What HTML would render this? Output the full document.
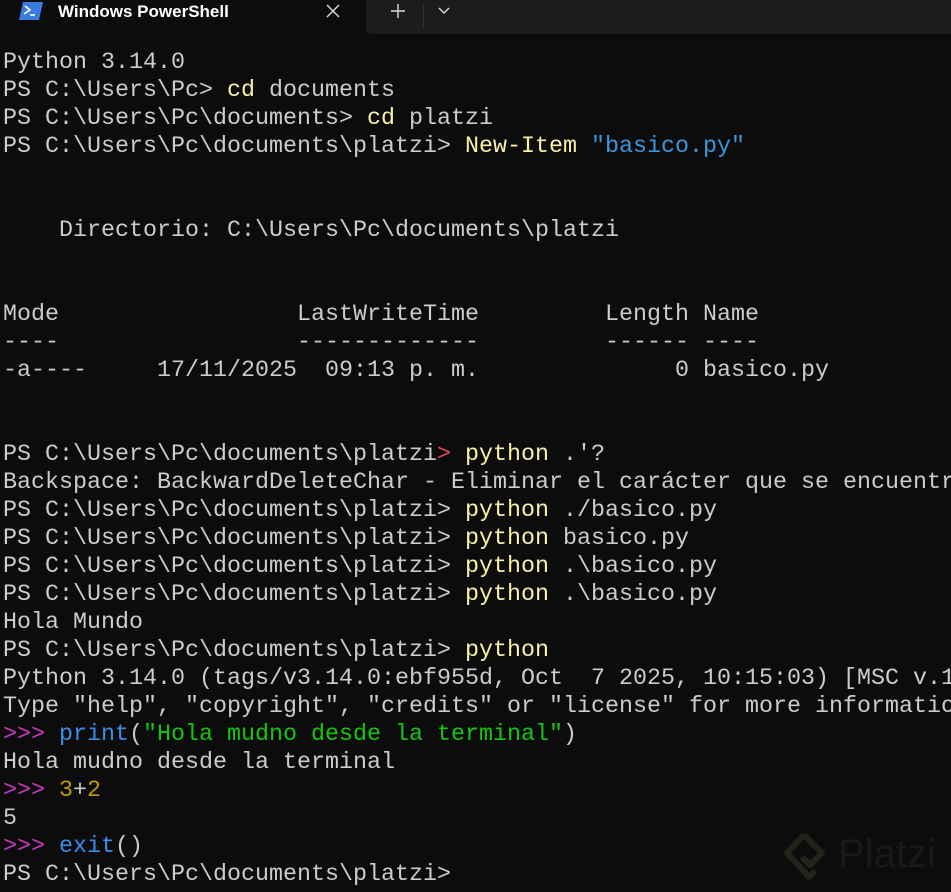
<!DOCTYPE html>
<html><head><meta charset="utf-8"><style>
html,body{margin:0;padding:0;background:#0c0c0c;width:951px;height:892px;overflow:hidden}
.bar{position:absolute;left:0;top:0;width:951px;height:34px;background:#0c0c0c}
.right{position:absolute;left:366px;top:0;width:600px;height:34px;background:#1c1c1c;border-bottom-left-radius:6px}
.sep{position:absolute;left:423px;top:5px;width:1px;height:24px;background:#333}
.title{position:absolute;left:58px;top:1px;font:600 17px "Liberation Sans",sans-serif;color:#fff;line-height:22px}
.term{position:absolute;left:3px;top:49px;font-family:"Liberation Mono",monospace;font-size:23.33px;line-height:28px;color:#cccccc;white-space:pre}
.y{color:#f9f1a5}.b{color:#3b8eea}.r{color:#e74856}.m{color:#c839c5}.g{color:#16c60c}.o{color:#c19c00}.s{color:#3a96dd}
.wm{position:absolute;left:838px;top:830px;font:40px "Liberation Sans",sans-serif;color:#191919;line-height:48px}
</style></head><body>
<div class="bar"></div>
<div class="right"></div><div class="sep"></div>
<svg style="position:absolute;left:19px;top:2px" width="24" height="18" viewBox="0 0 24 18"><path d="M4 0H24L20 18H0Z" fill="#3a7be0"/><path d="M6 4L11 8L5 12" stroke="#fff" stroke-width="1.6" fill="none"/><path d="M11 13H16" stroke="#fff" stroke-width="1.6"/></svg>
<div class="title">Windows PowerShell</div>
<svg style="position:absolute;left:326px;top:4px" width="14" height="14"><path d="M1 1L13 13M13 1L1 13" stroke="#ddd" stroke-width="1.4"/></svg>
<svg style="position:absolute;left:390px;top:3px" width="16" height="16"><path d="M8 1V15M1 8H15" stroke="#ddd" stroke-width="1.4"/></svg>
<svg style="position:absolute;left:438px;top:7px" width="12" height="8"><path d="M1 1L6 6L11 1" stroke="#ddd" stroke-width="1.4" fill="none"/></svg>
<svg style="position:absolute;left:782px;top:830px" width="48" height="56" viewBox="0 0 48 56"><path d="M22 5L40 23L28 35L20 27" stroke="#22241a" stroke-width="6" fill="none" stroke-linejoin="round"/><path d="M22 5L5 23L27 47L33 41" stroke="#22241a" stroke-width="6" fill="none" stroke-linejoin="round"/></svg>
<div class="wm">Platzi</div>
<div class="term">Python 3.14.0
PS C:\Users\Pc&gt; <span class="y">cd</span> documents
PS C:\Users\Pc\documents&gt; <span class="y">cd</span> platzi
PS C:\Users\Pc\documents\platzi&gt; <span class="y">New-Item</span> <span class="s">"basico.py"</span>


    Directorio: C:\Users\Pc\documents\platzi


Mode                 LastWriteTime         Length Name
----                 -------------         ------ ----
-a----     17/11/2025  09:13 p. m.              0 basico.py


PS C:\Users\Pc\documents\platzi<span class="r">&gt;</span> <span class="y">python</span> .'?
Backspace: BackwardDeleteChar - Eliminar el carácter que se encuentra
PS C:\Users\Pc\documents\platzi&gt; <span class="y">python</span> ./basico.py
PS C:\Users\Pc\documents\platzi&gt; <span class="y">python</span> basico.py
PS C:\Users\Pc\documents\platzi&gt; <span class="y">python</span> .\basico.py
PS C:\Users\Pc\documents\platzi&gt; <span class="y">python</span> .\basico.py
Hola Mundo
PS C:\Users\Pc\documents\platzi&gt; <span class="y">python</span>
Python 3.14.0 (tags/v3.14.0:ebf955d, Oct  7 2025, 10:15:03) [MSC v.1
Type "help", "copyright", "credits" or "license" for more information
<span class="m">&gt;&gt;&gt;</span> <span class="b">print</span>(<span class="g">"Hola mudno desde la terminal"</span>)
Hola mudno desde la terminal
<span class="m">&gt;&gt;&gt;</span> <span class="o">3</span>+<span class="o">2</span>
5
<span class="m">&gt;&gt;&gt;</span> <span class="b">exit</span>()
PS C:\Users\Pc\documents\platzi&gt;</div>
</body></html>
